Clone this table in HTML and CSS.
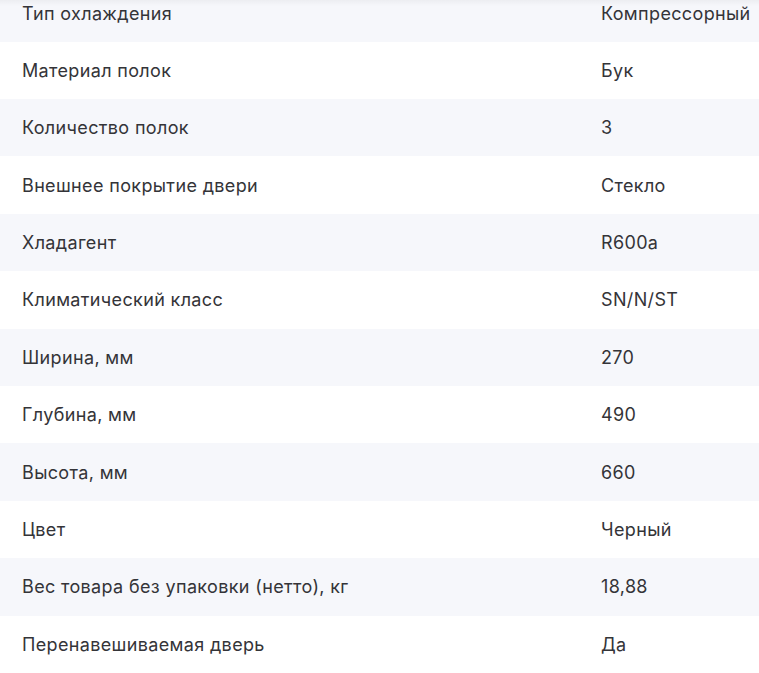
FILE: index.html
```html
<!DOCTYPE html>
<html lang="ru">
<head>
<meta charset="utf-8">
<link rel="stylesheet" href="styles.css">
</head>
<body>
<div class="shade"></div>
<div class="specs">
  <div class="row"><div class="name">Тип охлаждения</div><div class="val">Компрессорный</div></div>
  <div class="row"><div class="name">Материал полок</div><div class="val">Бук</div></div>
  <div class="row"><div class="name">Количество полок</div><div class="val">3</div></div>
  <div class="row"><div class="name">Внешнее покрытие двери</div><div class="val">Стекло</div></div>
  <div class="row"><div class="name">Хладагент</div><div class="val">R600a</div></div>
  <div class="row"><div class="name">Климатический класс</div><div class="val">SN/N/ST</div></div>
  <div class="row"><div class="name">Ширина, мм</div><div class="val">270</div></div>
  <div class="row"><div class="name">Глубина, мм</div><div class="val">490</div></div>
  <div class="row"><div class="name">Высота, мм</div><div class="val">660</div></div>
  <div class="row"><div class="name">Цвет</div><div class="val">Черный</div></div>
  <div class="row"><div class="name">Вес товара без упаковки (нетто), кг</div><div class="val">18,88</div></div>
  <div class="row"><div class="name">Перенавешиваемая дверь</div><div class="val">Да</div></div>
</div>
</body>
</html>
```
FILE: styles.css
```css
html, body {
  margin: 0;
  padding: 0;
  background: #ffffff;
}
body {
  font-family: Inter, "Noto Sans", sans-serif;
  font-size: 18px;
  letter-spacing: 0.35px;
  color: #343438;
  overflow: hidden;
}
.shade {
  position: absolute;
  left: 0;
  top: 0;
  width: 100%;
  height: 6px;
  background: linear-gradient(to bottom, rgba(0,0,0,0.04), rgba(0,0,0,0));
  pointer-events: none;
}
.specs {
  margin-top: -15.7px;
  display: flex;
  flex-direction: column;
}
.row {
  display: grid;
  grid-template-columns: 601px 1fr;
  align-items: center;
  height: 57.4px;
}
.row:nth-child(odd) {
  background: #f6f7fb;
}
.name {
  padding-left: 22px;
}
.val {
  white-space: nowrap;
}
```
